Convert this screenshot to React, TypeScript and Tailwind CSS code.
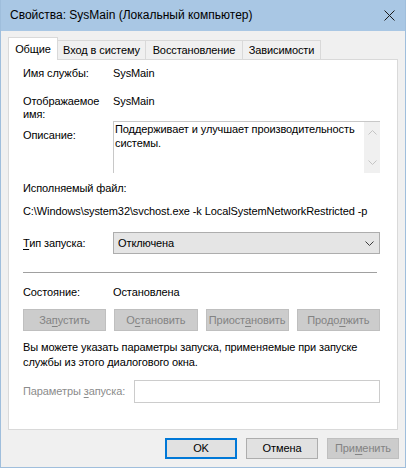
import React from 'react';

function Chevron({ up = false, className = '' }: { up?: boolean; className?: string }) {
  return (
    <svg width="9" height="5" viewBox="0 0 9 5" className={className}>
      <path d={up ? 'M0.5 4.5 L4.5 0.5 L8.5 4.5' : 'M0.5 0.5 L4.5 4.5 L8.5 0.5'} fill="none" stroke="currentColor" strokeWidth="1" />
    </svg>
  );
}

function U({ children }: { children: React.ReactNode }) {
  return <span className="underline underline-offset-2">{children}</span>;
}

const tabs = [
  { label: 'Вход в систему', w: 'w-[88px]' },
  { label: 'Восстановление', w: 'w-[97px]' },
  { label: 'Зависимости', w: 'w-[78px]' },
];

function DisabledButton({ children }: { children: React.ReactNode }) {
  return (
    <div className="flex-1 h-[22px] flex items-center justify-center bg-[#cccccc] border border-[#bfbfbf] text-[#838383]">
      {children}
    </div>
  );
}

export default function App() {
  return (
    <div className="w-[406px] h-[468px] flex flex-col bg-[#f0f0f0] border-x border-b border-[#9fbedc] text-[11px] tracking-[-0.1px] leading-[15px] text-black font-['Segoe_UI','Liberation_Sans',sans-serif]">
      <div className="h-[31px] shrink-0 bg-[#a9c7e4] flex items-center justify-between pl-[9px] pr-[10px] text-[12px] tracking-normal">
        <span>Свойства: SysMain (Локальный компьютер)</span>
        <svg width="11" height="11" viewBox="0 0 11 11">
          <path d="M0.5 0.5 L10.5 10.5 M10.5 0.5 L0.5 10.5" stroke="#1a1a1a" strokeWidth="1" />
        </svg>
      </div>

      <div className="flex-1 px-[7px] pt-[6px]">
        <div className="flex items-end h-[22px]">
          <div className="relative z-10 -mb-px h-[23px] w-[50px] flex items-center justify-center bg-white border border-b-0 border-[#d9d9d9]">
            Общие
          </div>
          {tabs.map((t) => (
            <div
              key={t.label}
              className={`${t.w} h-[19px] flex items-center justify-center bg-[#f0f0f0] border border-l-0 border-b-0 border-[#d9d9d9] pt-[1px]`}
            >
              {t.label}
            </div>
          ))}
        </div>

        <div className="w-[390px] h-[371px] bg-white border border-[#d9d9d9] pl-[14px] pr-[17px]">
          <div className="flex mt-[6px]">
            <div className="w-[90px]">Имя службы:</div>
            <div>SysMain</div>
          </div>

          <div className="flex mt-[14px]">
            <div className="w-[90px] leading-[13px]">
              Отображаемое
              <br />
              имя:
            </div>
            <div className="leading-[13px]">SysMain</div>
          </div>

          <div className="flex mt-[0px]">
            <div className="w-[90px] pt-[7px]">Описание:</div>
            <div className="flex-1 h-[52px] flex border border-[#c8c8c8] border-r-0 border-b-0 bg-white">
              <div className="flex-1 pl-[1px] leading-[14px]">
                Поддерживает и улучшает производительность системы.
              </div>
              <div className="w-[16px] bg-[#f0f0f0] flex flex-col items-center justify-between py-[8px] text-[#c4c4c4]">
                <Chevron up />
                <Chevron />
              </div>
            </div>
          </div>

          <div className="mt-[8px]">Исполняемый файл:</div>
          <div className="mt-[8px] whitespace-nowrap">
            C:\Windows\system32\svchost.exe -k LocalSystemNetworkRestricted -p
          </div>

          <div className="flex items-center mt-[13px]">
            <div className="w-[90px]">
              <U>Т</U>ип запуска:
            </div>
            <div className="flex-1 h-[22px] flex items-center justify-between bg-[#e5e5e5] border border-[#adadad] pl-[4px] pr-[5px]">
              <span>Отключена</span>
              <Chevron className="text-[#3c3c3c]" />
            </div>
          </div>

          <div className="mt-[18px] mr-[3px] h-px bg-[#a0a0a0]" />

          <div className="flex mt-[12px]">
            <div className="w-[90px]">Состояние:</div>
            <div>Остановлена</div>
          </div>

          <div className="flex gap-[8px] mt-[9px]">
            <DisabledButton>
              За<U>п</U>устить
            </DisabledButton>
            <DisabledButton>
              О<U>с</U>тановить
            </DisabledButton>
            <DisabledButton>
              Приост<U>а</U>новить
            </DisabledButton>
            <DisabledButton>
              Продо<U>л</U>жить
            </DisabledButton>
          </div>

          <div className="mt-[9px] whitespace-nowrap">
            Вы можете указать параметры запуска, применяемые при запуске
            <br />
            службы из этого диалогового окна.
          </div>

          <div className="flex items-center mt-[10px]">
            <div className="w-[111px] whitespace-nowrap text-[#8c8c8c]">
              Параметры <U>з</U>апуска:
            </div>
            <div className="flex-1 h-[23px] bg-white border border-[#cccccc]" />
          </div>
        </div>

        <div className="flex justify-end gap-[9px] mt-[8px] -mr-[1px]">
          <div className="w-[72px] h-[21px] flex items-center justify-center bg-[#e1e1e1] border-2 border-[#0078d7]">
            OK
          </div>
          <div className="w-[72px] h-[21px] flex items-center justify-center bg-[#e1e1e1] border border-[#adadad]">
            Отмена
          </div>
          <div className="w-[72px] h-[21px] flex items-center justify-center bg-[#cccccc] border border-[#bfbfbf] text-[#838383]">
            При<U>м</U>енить
          </div>
        </div>
      </div>
    </div>
  );
}
